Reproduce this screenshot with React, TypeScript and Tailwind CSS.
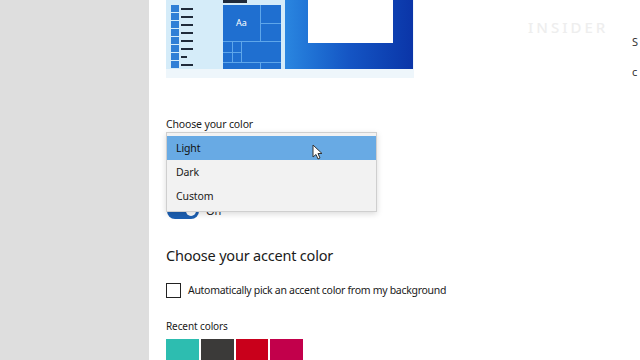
import React from "react";

const font = { fontFamily: '"Noto Sans", "Open Sans", sans-serif' };

function Preview() {
  const rows = [0, 1, 2, 3, 4, 5, 6, 7];
  return (
    <div className="flex flex-col w-[248px] h-[78px] bg-[#eef6fb]">
      <div className="flex h-[69px]">
        {/* start menu list */}
        <div className="w-[57px] bg-[#d5ecf9] flex flex-col pl-[5px] pt-[5px] gap-[0.5px]">
          {rows.map((r) => (
            <div key={r} className="flex items-center gap-[2px] h-[7.5px]">
              <div className="w-[8px] h-[7px] bg-[#2f7fd6]" />
              <div className={`h-[2px] bg-[#1f2a3a] ${r === 6 ? "w-[6px]" : "w-[12px]"}`} />
            </div>
          ))}
        </div>
        {/* tiles */}
        <div className="w-[58px] bg-[#d5ecf9] flex flex-col">
          <div className="h-[3px] w-[24px] bg-[#1f2a3a]" />
          <div className="h-[2px]" />
          <div className="flex gap-px bg-[#5ea6ea] flex-1 flex-col">
            <div className="flex gap-px h-[36px]">
              <div className="w-[37px] bg-[#1f6fd0] flex items-center justify-center text-white text-[9px]" style={font}>
                Aa
              </div>
              <div className="flex-1 flex flex-col gap-px">
                <div className="flex-1 bg-[#1f6fd0]" />
                <div className="flex-1 bg-[#1f6fd0]" />
              </div>
            </div>
            <div className="flex gap-px h-[20px]">
              <div className="grid grid-cols-2 gap-px w-[18px]">
                <div className="bg-[#1f6fd0]" />
                <div className="bg-[#1f6fd0]" />
                <div className="bg-[#1f6fd0]" />
                <div className="bg-[#1f6fd0]" />
              </div>
              <div className="flex-1 bg-[#1f6fd0]" />
            </div>
            <div className="flex gap-px flex-1">
              <div className="w-[37px] bg-[#1f6fd0]" />
              <div className="flex-1 bg-[#1f6fd0]" />
            </div>
          </div>
        </div>
        <div className="w-[4px] bg-[#d5ecf9]" />
        {/* desktop */}
        <div className="flex-1 bg-gradient-to-r from-[#2a86e0] via-[#1555c4] to-[#0b35a8] flex justify-center mr-[1px]">
          <div className="w-[85px] h-[43px] bg-white ml-[2px]" />
        </div>
      </div>
    </div>
  );
}

function Cursor() {
  return (
    <svg className="absolute left-[145px] top-[11px]" width="11" height="16" viewBox="0 0 11 16">
      <path d="M1 1 L1 13 L4 10.5 L6 15 L8 14 L6 9.5 L10 9.5 Z" fill="#ffffff" stroke="#333" strokeWidth="1" strokeLinejoin="round" />
    </svg>
  );
}

export default function App() {
  return (
    <div className="w-[640px] h-[360px] flex overflow-hidden bg-white" style={font}>
      <div className="w-[149px] h-full bg-[#dedede]" />
      <div className="relative flex-1 pl-[17px]">
        <Preview />
        <div className="mt-[39px] text-[10.5px] tracking-[-0.15px] leading-[15px] text-[#1a1a1a]">Choose your color</div>
        <div className="relative h-[88px]">
          <div className="absolute left-[1px] bottom-[1px] flex items-center gap-[7px]">
            <div className="w-[32px] h-[16px] rounded-full bg-[#1c5fb2] flex items-center justify-end pr-[3px]">
              <div className="w-[10px] h-[10px] rounded-full bg-white" />
            </div>
            <span className="text-[11px] text-[#1a1a1a]">On</span>
          </div>
          <div className="absolute left-0 top-0 w-[211px] h-[80px] bg-[#f2f2f2] border border-[#cfcfcf] shadow-[0_2px_6px_rgba(0,0,0,0.15)] pt-[3px] text-[10.5px] tracking-[-0.1px]">
            <div className="h-[24px] bg-[#68aae4] flex items-center pl-[9px] pt-[2px] text-[#111]">Light</div>
            <div className="h-[24px] flex items-center pl-[9px] pt-[2px] text-[#1a1a1a]">Dark</div>
            <div className="h-[24px] flex items-center pl-[9px] pt-[2px] text-[#1a1a1a]">Custom</div>
            <Cursor />
          </div>
        </div>
        <div className="mt-[25px] text-[14.5px] tracking-[-0.2px] leading-[20px] text-[#1a1a1a]">Choose your accent color</div>
        <div className="mt-[18px] flex items-center gap-[7px]">
          <div className="w-[15px] h-[15px] border-[1.5px] border-[#222] bg-white" />
          <span className="text-[10.5px] tracking-[-0.3px] text-[#1a1a1a]">Automatically pick an accent color from my background</span>
        </div>
        <div className="mt-[20px] text-[10px] tracking-[-0.1px] leading-[14px] text-[#1a1a1a]">Recent colors</div>
        <div className="mt-[6px] flex gap-[2px]">
          <div className="w-[33px] h-[22px] bg-[#2dbdb0]" />
          <div className="w-[33px] h-[22px] bg-[#3b3a39]" />
          <div className="w-[32px] h-[22px] bg-[#c9001b]" />
          <div className="w-[33px] h-[22px] bg-[#c2004b]" />
        </div>
        <div className="absolute left-[379px] top-[16px] text-[15px] tracking-[3px] text-[#eeeeee] font-medium">INSIDER</div>
        <div className="absolute left-[483px] top-[34px] text-[11px] text-[#333]">S</div>
        <div className="absolute left-[483px] top-[64px] text-[11px] text-[#333]">c</div>
      </div>
    </div>
  );
}
